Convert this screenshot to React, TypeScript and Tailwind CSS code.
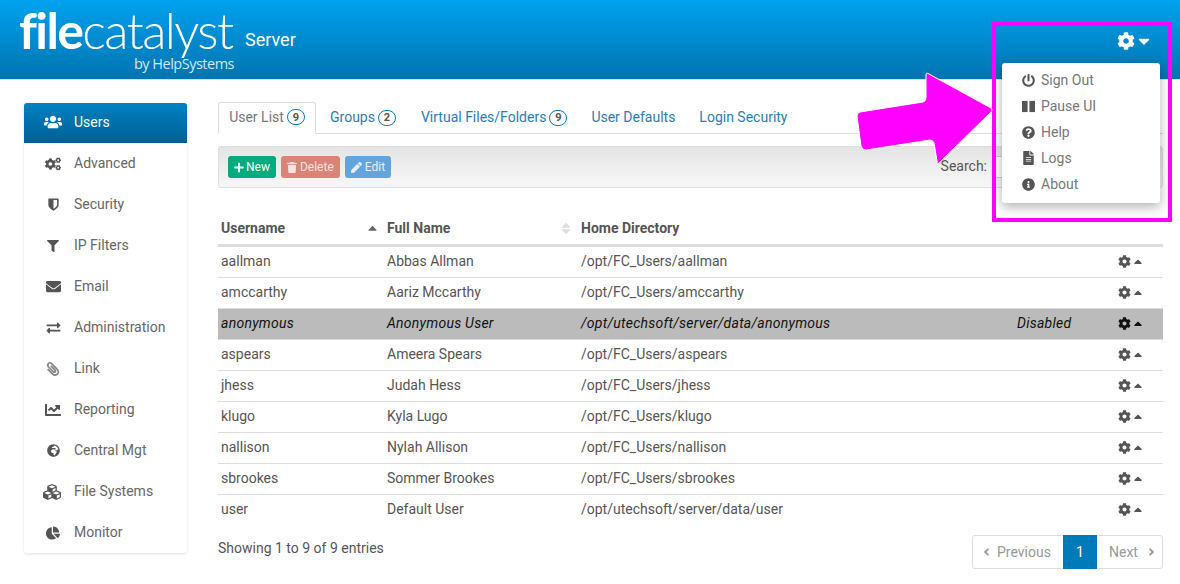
import React from 'react';
import {
  FaUsers, FaCogs, FaFilter, FaEnvelope, FaExchangeAlt, FaPaperclip, FaChartLine,
  FaGlobeAfrica, FaCubes, FaChartPie, FaCog, FaCaretDown, FaCaretUp, FaPlus, FaTrash, FaPen,
  FaPowerOff, FaQuestionCircle, FaFileAlt, FaInfoCircle, FaAngleLeft, FaAngleRight,
} from 'react-icons/fa';

const HalfShield = ({ className }: { className?: string }) => (
  <svg className={className} viewBox="0 0 12 14" fill="currentColor">
    <path d="M1 0.5h10a.6.6 0 0 1 .6.6v6.2c0 3-3.4 5.4-5.6 6.4-2.2-1-5.6-3.4-5.6-6.4V1.1a.6.6 0 0 1 .6-.6zM6 2.2v9.4c1.7-1 3.9-2.7 3.9-4.4v-5z" fillRule="evenodd" />
  </svg>
);

const WidePause = ({ className }: { className?: string }) => (
  <svg className={className} viewBox="0 0 14 14" fill="currentColor">
    <rect x="0" y="1" width="6" height="12" />
    <rect x="8" y="1" width="6" height="12" />
  </svg>
);

const navItems = [
  { label: 'Users', icon: FaUsers, size: 'h-[18px] w-[18px]' },
  { label: 'Advanced', icon: FaCogs, size: 'h-[16px] w-[16px]' },
  { label: 'Security', icon: HalfShield, size: 'h-[13px] w-[11px]' },
  { label: 'IP Filters', icon: FaFilter, size: 'h-[12px] w-[12px]' },
  { label: 'Email', icon: FaEnvelope, size: 'h-[15px] w-[15px]' },
  { label: 'Administration', icon: FaExchangeAlt, size: 'h-[14px] w-[15px]' },
  { label: 'Link', icon: FaPaperclip, size: 'h-[14px] w-[14px] -scale-x-100 text-[#888]' },
  { label: 'Reporting', icon: FaChartLine, size: 'h-[16px] w-[16px]' },
  { label: 'Central Mgt', icon: FaGlobeAfrica, size: 'h-[13px] w-[13px]' },
  { label: 'File Systems', icon: FaCubes, size: 'h-[18px] w-[18px] ml-[-3px]' },
  { label: 'Monitor', icon: FaChartPie, size: 'h-[14px] w-[14px]' },
];

const menuItems = [
  { label: 'Sign Out', icon: FaPowerOff, size: 'h-[13px] w-[13px]' },
  { label: 'Pause UI', icon: WidePause, size: 'h-[13px] w-[13px]' },
  { label: 'Help', icon: FaQuestionCircle, size: 'h-[13px] w-[13px]' },
  { label: 'Logs', icon: FaFileAlt, size: 'h-[14px] w-[13px]' },
  { label: 'About', icon: FaInfoCircle, size: 'h-[13px] w-[13px]' },
];

const users = [
  ['aallman', 'Abbas Allman', '/opt/FC_Users/aallman'],
  ['amccarthy', 'Aariz Mccarthy', '/opt/FC_Users/amccarthy'],
  ['anonymous', 'Anonymous User', '/opt/utechsoft/server/data/anonymous', 'Disabled'],
  ['aspears', 'Ameera Spears', '/opt/FC_Users/aspears'],
  ['jhess', 'Judah Hess', '/opt/FC_Users/jhess'],
  ['klugo', 'Kyla Lugo', '/opt/FC_Users/klugo'],
  ['nallison', 'Nylah Allison', '/opt/FC_Users/nallison'],
  ['sbrookes', 'Sommer Brookes', '/opt/FC_Users/sbrookes'],
  ['user', 'Default User', '/opt/utechsoft/server/data/user'],
];

const Badge = ({ n }: { n: number }) => (
  <span className="ml-[3px] inline-flex h-[16px] w-[18px] items-center justify-center rounded-full border border-[#0b7bbb] text-[11px] font-bold leading-none text-[#555]">
    {n}
  </span>
);

export default function App() {
  return (
    <div className="relative h-[584px] w-[1180px] overflow-hidden bg-white font-['Roboto',sans-serif] text-[14px] text-[#555]">
      <header className="flex h-[80px] items-start justify-between border-b border-[#ddd] bg-gradient-to-b from-[#00a2ef] to-[#0074b0] pl-[19px] pr-[28px] text-white">
        <div className="flex items-start">
          <div className="w-[215px]">
            <div className="mt-[1px] whitespace-nowrap font-['Lato',sans-serif] text-[50px] font-light leading-[58px] tracking-[-1.6px]">
              <span className="font-bold">file</span>catalyst
            </div>
            <div className="mt-[-4px] text-right font-['Open_Sans',sans-serif] text-[14.5px] leading-[18px] tracking-[-0.5px] text-[#cfe9f7]">by HelpSystems</div>
          </div>
          <div className="ml-[11px] mt-[30px] text-[18px] leading-[20px]">Server</div>
        </div>
        <div className="mt-[32px] flex items-center gap-[1px]">
          <FaCog className="h-[18px] w-[18px]" />
          <FaCaretDown className="h-[18px] w-[16px]" />
        </div>
      </header>

      <div className="flex items-start pl-[24px] pr-[17px] pt-[22px]">
        <nav className="mt-[1px] w-[163px] shrink-0 rounded-[3px] bg-white shadow-[0_1px_3px_rgba(0,0,0,0.12)]">
          {navItems.map(({ label, icon: Icon, size }, i) => (
            <div
              key={label}
              className={
                i === 0
                  ? 'flex h-[40px] items-center rounded-t-[3px] bg-gradient-to-b from-[#0081c2] to-[#005f94] pb-[2px] text-white'
                  : 'flex h-[41px] items-center text-[#666]'
              }
            >
              <span className={i === 0 ? 'flex w-[50px] justify-center pl-[8px] text-white' : 'flex w-[50px] justify-center pl-[8px] text-[#555]'}>
                <Icon className={size} />
              </span>
              {label}
            </div>
          ))}
        </nav>

        <main className="ml-[31px] min-w-0 flex-1">
          <div className="flex h-[32px] items-end border-b border-[#ddd]">
            <div className="mb-[-1px] flex h-[32px] w-[98px] items-center justify-center rounded-t-[3px] border border-b-white border-[#ddd] bg-white pb-[2px] text-[#777]">
              User List
              <Badge n={9} />
            </div>
            <div className="flex h-[31px] items-center pl-[14px] text-[#2a7db5]">
              Groups
              <Badge n={2} />
            </div>
            <div className="flex h-[31px] items-center pl-[25px] text-[#2a7db5]">
              Virtual Files/Folders
              <Badge n={9} />
            </div>
            <div className="flex h-[31px] items-center pl-[24px] text-[#2a7db5]">User Defaults</div>
            <div className="flex h-[31px] items-center pl-[24px] text-[#2a7db5]">Login Security</div>
          </div>

          <div className="mt-[12px] flex h-[42px] items-center justify-between rounded-[3px] border border-[#ddd] bg-gradient-to-b from-[#e4e4e4] to-[#f7f7f7] px-[9px]">
            <div className="flex items-center gap-[5px] text-[12px]">
              <button className="flex h-[22px] items-center gap-[2px] rounded-[3px] bg-[#00ac7d] px-[6px] text-white">
                <FaPlus className="h-[11px] w-[10px]" /> New
              </button>
              <button className="flex h-[22px] items-center gap-[3px] rounded-[3px] bg-[#d98476] px-[6px] text-[#f7e4e0]">
                <FaTrash className="h-[11px] w-[10px]" /> Delete
              </button>
              <button className="flex h-[22px] items-center gap-[3px] rounded-[3px] bg-[#65a3dd] px-[6px] text-[#e3effa]">
                <FaPen className="h-[11px] w-[11px]" /> Edit
              </button>
            </div>
            <div className="flex items-center gap-[6px]">
              <span className="mb-[2px]">Search:</span>
              <div className="h-[22px] w-[160px] rounded-[3px] border border-[#ccc] bg-white" />
            </div>
          </div>

          <div className="mt-[24px] grid h-[35px] grid-cols-[166px_194px_1fr] items-center border-b-[3px] border-[#ddd] px-[3px] pt-[1px] font-bold">
            <div className="relative">
              Username
              <FaCaretUp className="absolute right-[8px] top-[3px] h-[14px] w-[13px] text-[#666]" />
            </div>
            <div className="relative">
              Full Name
              <span className="absolute right-[9px] top-[0px] flex flex-col text-[#ddd]">
                <FaCaretUp className="mb-[-8px] h-[14px] w-[12px]" />
                <FaCaretDown className="h-[14px] w-[12px]" />
              </span>
            </div>
            <div>Home Directory</div>
          </div>

          {users.map(([name, full, home, status], i) => (
            <div
              key={name}
              className={
                'grid h-[31px] grid-cols-[166px_194px_436px_101px_1fr] items-center px-[3px] pb-[2px] ' +
                (status ? 'bg-[#bbb] italic tracking-[0.25px] text-[#111] ' : '') +
                (i < users.length - 1 ? 'border-b border-[#ddd]' : '')
              }
            >
              <div>{name}</div>
              <div>{full}</div>
              <div>{home}</div>
              <div>{status}</div>
              <div className={status ? 'flex items-center gap-[1px] text-[#111]' : 'flex items-center gap-[1px] text-[#555]'}>
                <FaCog className="h-[13px] w-[13px]" />
                <FaCaretUp className="h-[13px] w-[12px]" />
              </div>
            </div>
          ))}

          <div className="mt-[9px] flex items-center justify-between">
            <div className="mt-[-8px]">Showing 1 to 9 of 9 entries</div>
            <div className="flex h-[34px] items-stretch rounded-[3px] border border-[#ddd] text-[#999]">
              <div className="flex w-[90px] items-center gap-[6px] pl-[9px]">
                <FaAngleLeft className="h-[12px] w-[9px]" /> Previous
              </div>
              <div className="my-[-1px] flex w-[34px] items-center justify-center bg-[#007ab8] text-white">1</div>
              <div className="flex w-[65px] items-center gap-[9px] pl-[12px]">
                Next <FaAngleRight className="h-[12px] w-[9px]" />
              </div>
            </div>
          </div>
        </main>
      </div>

      {/* dropdown menu, open over the page */}
      <div className="absolute left-[1002px] top-[63px] h-[140px] w-[158px] rounded-[3px] bg-white pt-[4px] text-[#777] shadow-[0_4px_12px_rgba(0,0,0,0.3)]">
        {menuItems.map(({ label, icon: Icon, size }) => (
          <div key={label} className="flex h-[26px] items-center pl-[20px]">
            <span className="flex w-[19px] justify-start text-[#555]">
              <Icon className={size} />
            </span>
            {label}
          </div>
        ))}
      </div>

      {/* annotation drawn on top of the screenshot */}
      <div className="absolute left-[992px] top-[22px] h-[200px] w-[180px] border-[4px] border-[#ff00ff]" />
      <svg className="absolute left-[850px] top-[65px]" width="150" height="110" viewBox="850 65 150 110">
        <path
          d="M860 112 L923 102 Q926 101 926 98 L926 75 Q926 72 929 74 L991 108 Q993 110 991 112 L940 162 Q937 165 937 161 L934 143 Q933 140 930 140 L866 150 Q862 150 861 146 L857 116 Q857 113 860 112 Z"
          fill="#ff00ff"
          stroke="#ffffff"
          strokeWidth="1"
        />
      </svg>
    </div>
  );
}
